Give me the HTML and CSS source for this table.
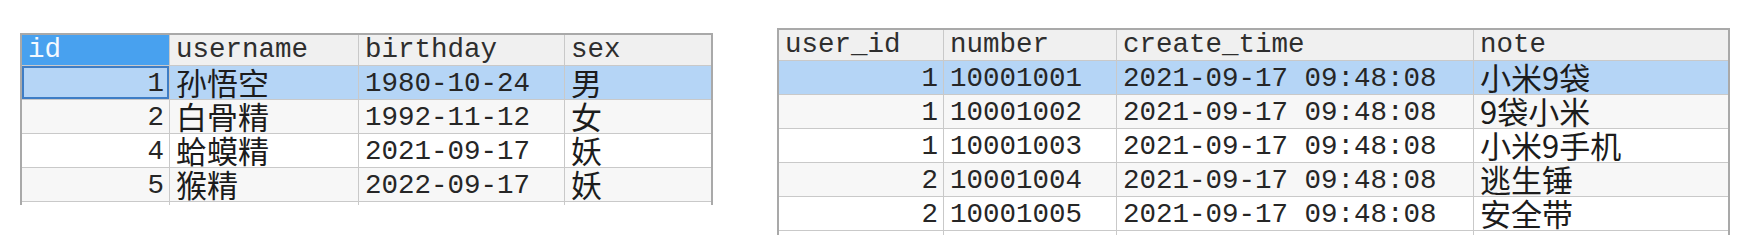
FILE: index.html
```html
<!DOCTYPE html>
<html lang="zh">
<head>
<meta charset="utf-8">
<title>Tables</title>
<link rel="stylesheet" href="styles.css">
</head>
<body>
<main class="page">
  <section class="grid grid-users">
    <table>
      <colgroup>
        <col class="c-id"><col class="c-username"><col class="c-birthday"><col class="c-sex">
      </colgroup>
      <thead>
        <tr><th class="sel-head">id</th><th>username</th><th>birthday</th><th class="last">sex</th></tr>
      </thead>
      <tbody>
        <tr class="selected"><td class="num focus">1</td><td><span class="cjk">孙悟空</span></td><td>1980-10-24</td><td class="last"><span class="cjk">男</span></td></tr>
        <tr class="alt"><td class="num">2</td><td><span class="cjk">白骨精</span></td><td>1992-11-12</td><td class="last"><span class="cjk">女</span></td></tr>
        <tr><td class="num">4</td><td><span class="cjk">蛤蟆精</span></td><td>2021-09-17</td><td class="last"><span class="cjk">妖</span></td></tr>
        <tr class="alt"><td class="num">5</td><td><span class="cjk">猴精</span></td><td>2022-09-17</td><td class="last"><span class="cjk">妖</span></td></tr>
        <tr class="stub"><td></td><td></td><td></td><td class="last"></td></tr>
      </tbody>
    </table>
  </section>

  <section class="grid grid-orders">
    <table>
      <colgroup>
        <col class="c-userid"><col class="c-number"><col class="c-time"><col class="c-note">
      </colgroup>
      <thead>
        <tr><th>user_id</th><th>number</th><th>create_time</th><th class="last">note</th></tr>
      </thead>
      <tbody>
        <tr class="selected"><td class="num">1</td><td>10001001</td><td>2021-09-17 09:48:08</td><td class="last"><span class="cjk">小米9袋</span></td></tr>
        <tr class="alt"><td class="num">1</td><td>10001002</td><td>2021-09-17 09:48:08</td><td class="last"><span class="cjk">9袋小米</span></td></tr>
        <tr><td class="num">1</td><td>10001003</td><td>2021-09-17 09:48:08</td><td class="last"><span class="cjk">小米9手机</span></td></tr>
        <tr class="alt"><td class="num">2</td><td>10001004</td><td>2021-09-17 09:48:08</td><td class="last"><span class="cjk">逃生锤</span></td></tr>
        <tr><td class="num">2</td><td>10001005</td><td>2021-09-17 09:48:08</td><td class="last"><span class="cjk">安全带</span></td></tr>
        <tr class="stub"><td></td><td></td><td></td><td class="last"></td></tr>
      </tbody>
    </table>
  </section>
</main>
</body>
</html>
```

FILE: styles.css
```css
html, body {
  margin: 0;
  padding: 0;
  background: #ffffff;
}

.page {
  display: flex;
  align-items: flex-start;
  gap: 64px;
  padding: 28px 0 0 20px;
  width: 1743px;
  height: 241px;
  box-sizing: border-box;
  overflow: hidden;
}

.grid {
  border: 2px solid #a9a9a9;
  border-bottom: 0;
  overflow: hidden;
}

.grid-users {
  margin-top: 5px;
  width: 689px;
  height: 170px;
}

.grid-orders {
  width: 949px;
  height: 205px;
}

table {
  border-collapse: separate;
  border-spacing: 0;
  table-layout: fixed;
  width: 100%;
  font-family: "Liberation Mono", "Noto Sans CJK SC", monospace;
  font-size: 27.5px;
  color: #262626;
}

.c-id { width: 148px; }
.c-username { width: 189px; }
.c-birthday { width: 206px; }
.c-sex { width: 146px; }

.c-userid { width: 165px; }
.c-number { width: 173px; }
.c-time { width: 357px; }
.c-note { width: 254px; }

th, td {
  box-sizing: border-box;
  border-right: 1px solid #c9c9c9;
  border-bottom: 1px solid #c9c9c9;
  padding: 0 5px 0 6px;
  line-height: 30px;
  white-space: nowrap;
  overflow: hidden;
  text-align: left;
  vertical-align: middle;
}

th {
  height: 31px;
  font-weight: normal;
  background: #f0f0f0;
  color: #2e2e2e;
}

td {
  height: 34px;
  padding-top: 2px;
  background: #ffffff;
}

th.last, td.last {
  border-right: 0;
}

th.sel-head {
  background: #48a1ef;
  color: #f4f9ff;
}

tr.alt td {
  background: #f7f7f7;
}

tr.selected td {
  background: #b5d5f6;
}

td.focus {
  box-shadow: inset 0 0 0 2px #3e7dc5;
}

td.num {
  text-align: right;
}

tr.stub td {
  height: 4px;
  padding: 0;
  line-height: 0;
  border-bottom: 0;
}

.cjk {
  display: inline-block;
  vertical-align: top;
  height: 30px;
  font-family: "Noto Sans CJK SC", sans-serif;
  font-size: 31px;
  line-height: 26px;
  color: #1c1c1c;
}
```
